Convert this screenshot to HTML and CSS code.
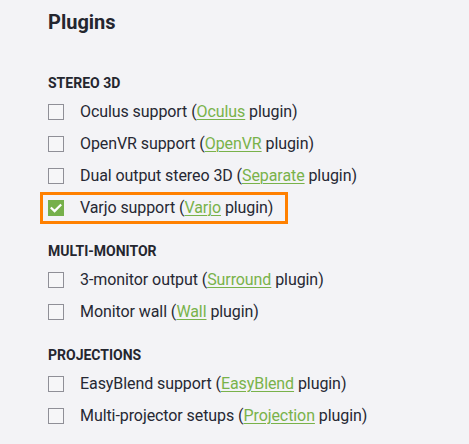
FILE: index.html
```html
<!DOCTYPE html>
<html lang="en">
<head>
<meta charset="utf-8">
<title>Plugins</title>
<link rel="stylesheet" href="styles.css">
</head>
<body>
<main class="panel">
  <h1 class="title">Plugins</h1>

  <section class="group">
    <h2 class="group-title">STEREO 3D</h2>
    <div class="row"><span class="box"></span><span class="label">Oculus support (<a href="#" class="link">Oculus</a> plugin)</span></div>
    <div class="row"><span class="box"></span><span class="label">OpenVR support (<a href="#" class="link">OpenVR</a> plugin)</span></div>
    <div class="row"><span class="box"></span><span class="label">Dual output stereo 3D (<a href="#" class="link">Separate</a> plugin)</span></div>
    <div class="row row-highlight"><span class="box box-checked"><svg viewBox="0 0 16 16" width="16" height="16"><path d="M3.6 8.2 L6.6 11.1 L12.4 5.2" fill="none" stroke="#ffffff" stroke-width="2.2" stroke-linecap="square"/></svg></span><span class="label">Varjo support (<a href="#" class="link">Varjo</a> plugin)</span></div>
  </section>

  <section class="group">
    <h2 class="group-title">MULTI-MONITOR</h2>
    <div class="row"><span class="box"></span><span class="label">3-monitor output (<a href="#" class="link">Surround</a> plugin)</span></div>
    <div class="row"><span class="box"></span><span class="label">Monitor wall (<a href="#" class="link">Wall</a> plugin)</span></div>
  </section>

  <section class="group">
    <h2 class="group-title">PROJECTIONS</h2>
    <div class="row"><span class="box"></span><span class="label">EasyBlend support (<a href="#" class="link">EasyBlend</a> plugin)</span></div>
    <div class="row"><span class="box"></span><span class="label">Multi-projector setups (<a href="#" class="link">Projection</a> plugin)</span></div>
  </section>
</main>
</body>
</html>
```

FILE: styles.css
```css
html, body {
  margin: 0;
  padding: 0;
  background: #f3f3f6;
}

body {
  font-family: Roboto, "Liberation Sans", sans-serif;
  color: #262833;
}

.panel {
  padding: 10px 0 0 48px;
}

.title {
  margin: 0;
  font-size: 20px;
  line-height: 24px;
  font-weight: 700;
  color: #24262f;
}

.group {
  margin-top: 16px;
}

.title + .group {
  margin-top: 38px;
}

.group-title {
  margin: 0 0 2px 0;
  font-size: 14px;
  line-height: 22px;
  font-weight: 700;
  color: #24262f;
}

.row {
  display: flex;
  align-items: center;
  height: 32px;
  font-size: 16px;
  line-height: 20px;
  letter-spacing: -0.08px;
}

.row-highlight {
  box-sizing: border-box;
  width: fit-content;
  margin-left: -8px;
  padding: 0 12px 0 5px;
  border: 3px solid #ff8000;
}

.box {
  box-sizing: border-box;
  width: 16px;
  height: 16px;
  flex: 0 0 16px;
  border: 1px solid #8f8f97;
  background: #f6f6f8;
  margin-right: 16px;
  display: flex;
}

.box-checked {
  border: none;
  background: #76b04b;
}

.label {
  white-space: nowrap;
}

.link {
  color: #79b24a;
  text-decoration: underline;
  text-decoration-thickness: 1px;
  text-underline-offset: 2px;
}
```
